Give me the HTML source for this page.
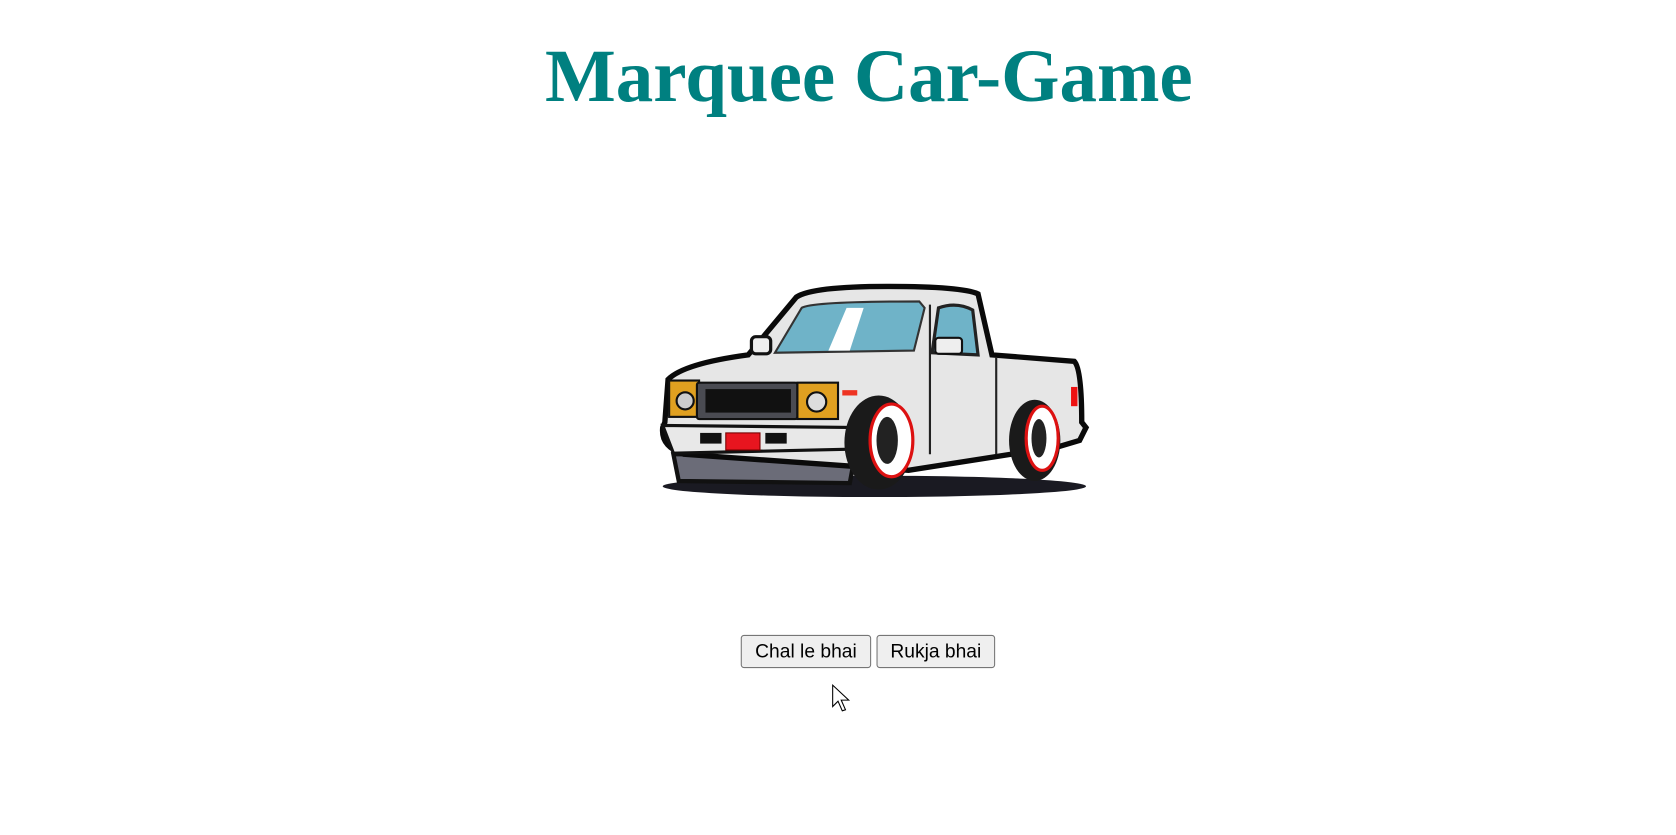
<!DOCTYPE html>
<html><head><style>
body{margin:0;background:#fff;width:1676px;height:835px;position:relative;overflow:hidden;font-family:"Liberation Sans",sans-serif}
h1{position:absolute;left:545px;top:32px;margin:0;font-family:"Liberation Serif",serif;font-weight:bold;font-size:75px;color:#008080;white-space:nowrap;line-height:90px}
#w{position:absolute;left:0;top:0;width:1568px;height:781px;transform:scale(1.0689);transform-origin:0 0}
button{position:absolute;top:594px;height:31px;font-family:"Liberation Sans",sans-serif;font-size:18px;background:#efefef;border:1px solid #767676;border-radius:3px;padding:0 10px;color:#000}
</style></head><body>
<h1>Marquee Car-Game</h1>
<div id="w">
<svg style="position:absolute;left:0;top:0" width="1568" height="781">
<ellipse cx="818" cy="455" rx="198" ry="10" fill="#1a1a22"/>
<path d="M630 425 L800 425 L795 452 L635 450 Z" fill="#6b6c78" stroke="#111" stroke-width="4"/>
<path d="M622 395 L625 355 Q640 340 700 332 L745 278 Q760 268 830 268 Q900 268 915 275 L928 332 L1005 338 Q1012 345 1012 395 L1016 400 L1010 412 L990 418 L850 440 L640 425 Q618 418 620 400 Z" fill="#e6e6e6" stroke="#0a0a0a" stroke-width="5"/>
<path d="M725 330 L750 288 Q760 282 860 282 L865 288 L855 328 Z" fill="#6fb3c8" stroke="#333" stroke-width="2"/>
<path d="M792 288 L808 288 L795 328 L775 328 Z" fill="#fff"/>
<path d="M872 330 L878 288 Q895 282 910 290 L915 332 Z" fill="#6fb3c8" stroke="#222" stroke-width="3"/>
<rect x="875" y="316" width="25" height="15" rx="3" fill="#eee" stroke="#111" stroke-width="2"/>
<rect x="703" y="315" width="18" height="16" rx="4" fill="#eee" stroke="#111" stroke-width="3"/>
<rect x="626" y="356" width="28" height="34" fill="#e0a020" stroke="#111" stroke-width="2"/>
<circle cx="641" cy="375" r="8" fill="#ccc" stroke="#111" stroke-width="2"/>
<rect x="652" y="358" width="94" height="34" rx="2" fill="#4a4b52" stroke="#111" stroke-width="2"/>
<rect x="660" y="364" width="80" height="22" fill="#111"/>
<rect x="746" y="358" width="38" height="34" fill="#e0a020" stroke="#111" stroke-width="2"/>
<circle cx="764" cy="376" r="9" fill="#ddd" stroke="#111" stroke-width="2"/>
<rect x="788" y="365" width="14" height="5" fill="#e32"/>
<rect x="1002" y="362" width="6" height="18" fill="#e11"/>
<path d="M620 398 L805 400 L805 420 L630 424 Z" fill="#e8e8e8" stroke="#111" stroke-width="3"/>
<rect x="679" y="405" width="32" height="16" fill="#e8151f" stroke="#700" stroke-width="1"/>
<rect x="655" y="405" width="20" height="10" fill="#111"/><rect x="716" y="405" width="20" height="10" fill="#111"/>
<ellipse cx="822" cy="414" rx="32" ry="44" fill="#1a1a1a"/>
<ellipse cx="834" cy="412" rx="20" ry="34" fill="#fff" stroke="#d11" stroke-width="3"/>
<ellipse cx="830" cy="412" rx="10" ry="22" fill="#222"/>
<ellipse cx="968" cy="412" rx="24" ry="38" fill="#1a1a1a"/>
<ellipse cx="975" cy="410" rx="15" ry="30" fill="#fff" stroke="#d11" stroke-width="3"/>
<ellipse cx="972" cy="410" rx="7" ry="18" fill="#222"/>
<path d="M870 285 L870 425 M932 334 L932 425" stroke="#222" stroke-width="2" fill="none"/>
</svg>
<button style="left:693px;width:122px">Chal le bhai</button>
<button style="left:820px;width:111px">Rukja bhai</button>
<svg style="position:absolute;left:778px;top:640px" width="18" height="28"><path d="M1 1 L1 21 L6 16 L10 25 L13 24 L9 15 L16 15 Z" fill="#fff" stroke="#000" stroke-width="1"/></svg>
</div>
</body></html>
